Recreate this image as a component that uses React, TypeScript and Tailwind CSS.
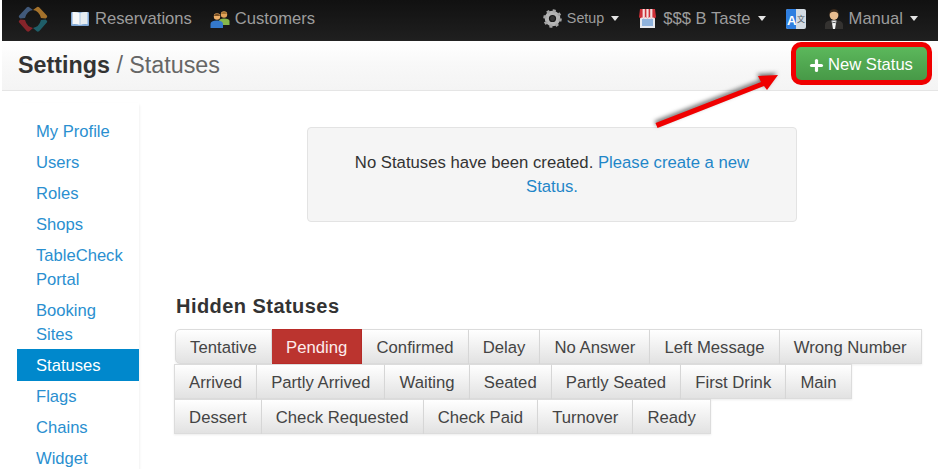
import { Plus } from 'lucide-react';

const sideLinks = ['My Profile', 'Users', 'Roles', 'Shops', 'TableCheck Portal', 'Booking Sites', 'Statuses', 'Flags', 'Chains', 'Widget'];

const statusRows = [
  ['Tentative', 'Pending', 'Confirmed', 'Delay', 'No Answer', 'Left Message', 'Wrong Number'],
  ['Arrived', 'Partly Arrived', 'Waiting', 'Seated', 'Partly Seated', 'First Drink', 'Main'],
  ['Dessert', 'Check Requested', 'Check Paid', 'Turnover', 'Ready'],
];

function Logo() {
  return (
    <svg width="30" height="30" viewBox="0 0 32 32">
      <path d="M1 14 Q0.5 13 1.5 12 L9.5 3.5 Q11 2.5 12 3.5 L16 6.5 Q9.5 7.5 7.5 15 L2.5 15.5 Z" fill="#41597a" />
      <path d="M16 6.5 L20 3.5 Q21 2.5 22.5 3.5 L30.5 12 Q31.5 13 31 14 L29.5 15.5 L24.5 15 Q22.5 7.5 16 6.5 Z" fill="#a5722b" />
      <path d="M1 18 L2.5 16.5 L7.5 17 Q9.5 24.5 16 25.5 L12 29 Q11 30 9.5 29 L1.5 20 Q0.5 19 1 18 Z" fill="#86242a" />
      <path d="M24.5 17 L29.5 16.5 L31 18 Q31.5 19 30.5 20 L22.5 29 Q21 30 20 29 L16 25.5 Q22.5 24.5 24.5 17 Z" fill="#1f5e68" />
    </svg>
  );
}

function BookIcon() {
  return (
    <svg width="18" height="16" viewBox="0 0 18 16">
      <rect x="0" y="1" width="18" height="14" rx="1" fill="#7ea6d4" />
      <path d="M1.5 1 Q6 0.5 8.7 2 V14 Q6 12.8 1.5 13.2 Z" fill="#f6f8f9" />
      <path d="M16.5 1 Q12 0.5 9.3 2 V14 Q12 12.8 16.5 13.2 Z" fill="#e6ecef" />
    </svg>
  );
}

function PeopleIcon() {
  return (
    <svg width="20" height="18" viewBox="0 0 20 18">
      <circle cx="14" cy="4.5" r="3.2" fill="#e3a45a" />
      <path d="M10.8 4 Q14 -1 17.2 4 Z" fill="#a87432" />
      <path d="M9 16 V11 Q9 8.5 14 8.5 Q19.5 8.5 19.5 11 V15 H12 Z" fill="#86b84a" />
      <circle cx="7" cy="6.5" r="3.2" fill="#eeb06a" />
      <path d="M3.6 6 Q7 1 10.4 6 Z" fill="#7a4f22" />
      <path d="M0.5 18 V14 Q0.5 10.5 7 10.5 Q13 10.5 13 14 V18 Z" fill="#3479cc" />
    </svg>
  );
}

function GearIcon() {
  return (
    <svg width="19" height="19" viewBox="0 0 20 20">
      <circle cx="10" cy="10" r="6" fill="none" stroke="#b4b4b4" strokeWidth="4.4" />
      <circle cx="10" cy="10" r="8.2" fill="none" stroke="#a4a4a4" strokeWidth="3.2" strokeDasharray="3 3.44" />
      <circle cx="10" cy="10" r="2.6" fill="#333" />
    </svg>
  );
}

function ShopIcon() {
  return (
    <svg width="17" height="21" viewBox="0 0 17 21">
      <rect x="1" y="9" width="15" height="11" fill="#e6e8ee" />
      <rect x="3" y="11" width="11" height="7" fill="#8fb2dc" />
      <path d="M1 1 H16 L17 9 Q15.5 11.5 14 9 Q12.3 11.5 10.8 9 Q8.5 11.5 6.4 9 Q4.6 11.5 3 9 Q1.5 11.5 0 9 Z" fill="#cf3038" />
      <path d="M3.6 1 h2.2 v9 h-2.2 Z M7.4 1 h2.2 v9 h-2.2 Z M11.2 1 h2.2 v9 h-2.2 Z" fill="#f4dfe0" />
    </svg>
  );
}

function TranslateIcon() {
  return (
    <svg width="20" height="20" viewBox="0 0 20 20">
      <rect width="20" height="20" rx="2" fill="#d3dbe3" />
      <path d="M0 2 Q0 0 2 0 H10 V20 H2 Q0 20 0 18 Z" fill="#2f7fe0" />
      <text x="1" y="15.5" fontSize="13" fontWeight="700" fill="#fff" fontFamily="'Liberation Sans', sans-serif">A</text>
      <text x="11" y="13" fontSize="8" fill="#4f5a66" fontFamily="'Noto Sans CJK SC', sans-serif">文</text>
    </svg>
  );
}

function ManIcon() {
  return (
    <svg width="18" height="21" viewBox="0 0 18 21">
      <path d="M0 21 V17 Q0 13 5 12.5 H13 Q18 13 18 17 V21 Z" fill="#343230" />
      <path d="M6.5 12.5 H11.5 L10 21 H8 Z" fill="#f4f4f4" />
      <path d="M7.6 13.4 L9 14.4 L10.4 13.4 V15.4 L9 14.4 L7.6 15.4 Z" fill="#111" />
      <ellipse cx="9" cy="7" rx="4.4" ry="5" fill="#e8bc8e" />
      <path d="M4.4 7 Q4 1 9 1 Q14 1 13.6 7 Q12.6 3.6 9 3.8 Q5.4 3.6 4.4 7 Z" fill="#3b2a1c" />
    </svg>
  );
}

function Caret() {
  return <span className="ml-[7px] inline-block h-0 w-0 border-x-[4.5px] border-t-[5px] border-x-transparent border-t-[#e4e4e4]" />;
}

function StatusRow({ items, first }: { items: string[]; first: boolean }) {
  return (
    <div className={`flex h-[35px] ${first ? 'ml-px' : ''}`}>
      {items.map((label, i) => {
        const active = label === 'Pending';
        return (
          <span
            key={label}
            className={`flex items-center border-y border-r px-[14.1px] pt-[2px] text-[16.7px] ${
              active
                ? 'border-[#b92c28] bg-[#bb342f] text-[#fdecec]'
                : 'border-[#dcdcdc] bg-gradient-to-b from-white to-[#e2e2e2] text-[#444] shadow-[0_1px_2px_rgba(0,0,0,0.08)]'
            } ${i === 0 ? 'border-l' : ''} ${i === 0 && first ? 'rounded-l-[5px]' : ''}`}
          >
            {label}
          </span>
        );
      })}
    </div>
  );
}

export default function App() {
  return (
    <div className="relative h-[469px] w-[938px] overflow-hidden bg-white font-['Liberation_Sans',sans-serif]">
      {/* Top nav */}
      <div className="ml-[2px] flex h-[41px] items-center justify-between border-b border-[#222] bg-gradient-to-b from-[#111] to-[#1f1f1f] pb-[2px] pl-[16px] pr-[20px]">
        <div className="flex items-center text-[16.6px] text-[#9d9d9d]">
          <Logo />
          <span className="ml-[23px] flex items-center gap-[6px]">
            <BookIcon />
            Reservations
          </span>
          <span className="ml-[18px] flex items-center gap-[5px]">
            <PeopleIcon />
            Customers
          </span>
        </div>
        <div className="flex items-center text-[16.6px] text-[#9d9d9d]">
          <span className="flex items-center text-[14.3px]">
            <span className="mr-[5px]">
              <GearIcon />
            </span>
            Setup
            <Caret />
          </span>
          <span className="ml-[20px] flex items-center">
            <span className="mr-[7px]">
              <ShopIcon />
            </span>
            $$$ B Taste
            <Caret />
          </span>
          <span className="ml-[20px]">
            <TranslateIcon />
          </span>
          <span className="ml-[19px] flex items-center">
            <span className="mr-[6px]">
              <ManIcon />
            </span>
            Manual
            <Caret />
          </span>
        </div>
      </div>

      {/* Page header */}
      <div className="ml-[2px] flex h-[50px] justify-between border-b border-[#e5e5e5] bg-gradient-to-b from-[#fff] via-[#f8f8f8] to-[#f4f4f4] pl-[16px] pr-[6px]">
        <h1 className="self-center text-[23.3px] text-[#666]">
          <span className="font-bold text-[#333]">Settings</span> / Statuses
        </h1>
        <button className="mt-px flex h-[43px] w-[141px] items-center justify-center gap-[3px] rounded-[10px] border-[5px] border-[#f00000] bg-gradient-to-b from-[#5cb85c] to-[#479947] pr-[2px] pt-[3px] text-[16.6px] text-white">
          <Plus size={17} strokeWidth={4.5} />
          New Status
        </button>
      </div>

      <div className="mt-[12px] flex">
        {/* Sidebar */}
        <nav className="ml-[17px] h-[400px] w-[122px] shadow-[2px_0_3px_-2px_rgba(0,0,0,0.1)]">
          <ul className="flex flex-col gap-[7px] pt-[17px] text-[16.6px] leading-[24px] text-[#2a8fd0]">
            {sideLinks.map((link) => (
              <li
                key={link}
                className={`px-[19px] ${link === 'Statuses' ? '-mb-[3px] -mt-[5px] bg-[#0088cc] pb-[3px] pt-[5px] text-white' : ''} `}
              >
                {link}
              </li>
            ))}
          </ul>
        </nav>

        {/* Main */}
        <div className="ml-[36px] flex-1">
          <div className="ml-[132px] mt-[24px] flex h-[95px] w-[490px] items-center justify-center rounded-[4px] border border-[#e3e3e3] bg-[#f5f5f5] px-[40px] text-center text-[16.7px] leading-[24px] text-[#333]">
            <p>
              No Statuses have been created. <span className="text-[#1f86c8]">Please create a new Status.</span>
            </p>
          </div>
          <h2 className="ml-px mt-[72px] text-[20px] font-bold leading-[24px] tracking-[0.45px] text-[#333]">Hidden Statuses</h2>
          <div className="-ml-px mt-[11px]">
            {statusRows.map((row, i) => (
              <StatusRow key={row[0]} items={row} first={i === 0} />
            ))}
          </div>
        </div>
      </div>

      {/* Annotation arrow */}
      <svg className="absolute left-[650px] top-[70px] drop-shadow-[-1px_-2px_2px_rgba(0,0,0,0.55)]" width="135" height="62" viewBox="0 0 135 62">
        <path d="M5.5 53 L111 12 L108 6 L128 5 L117 20 L114 16 L7.5 58 Z" fill="#f00000" />
      </svg>
    </div>
  );
}
